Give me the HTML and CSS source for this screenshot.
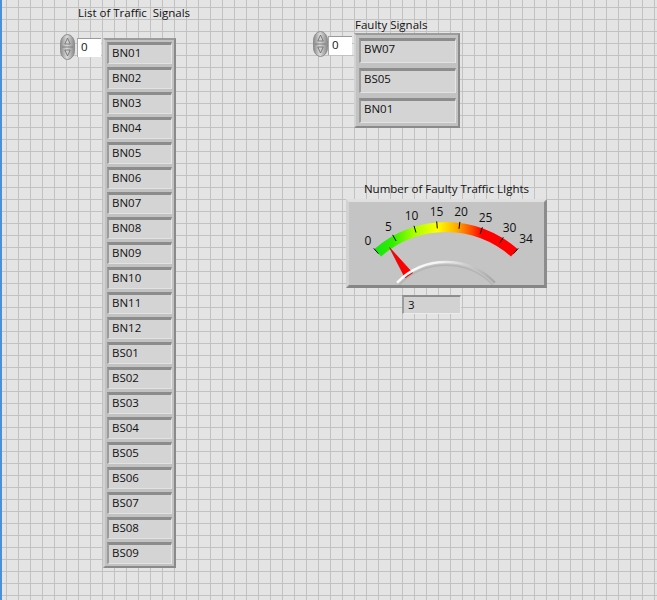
FILE: index.html
```html
<!DOCTYPE html>
<html>
<head>
<meta charset="utf-8">
<link rel="stylesheet" href="styles.css">
</head>
<body>
<div class="panel">
  <div class="ctl ctl-list">
    <div class="label label-list">List of Traffic  Signals</div>
    <div class="ctl-row">
      <svg class="spin" width="15" height="26" viewBox="0 0 15 26">
        <defs><linearGradient id="sg1" x1="0" x2="1"><stop offset="0" stop-color="#8a8a8a"/><stop offset="0.45" stop-color="#dadada"/><stop offset="1" stop-color="#8a8a8a"/></linearGradient></defs>
        <rect x="0.5" y="0.5" width="14" height="25" rx="7" ry="9" fill="url(#sg1)" stroke="#8c8c8c"/>
        <line x1="2" y1="13" x2="13" y2="13" stroke="#7c7c7c"/>
        <path d="M7.5 4 L4.8 10 L10.2 10 Z" fill="#cfcfcf" stroke="#6a6a6a" stroke-width="0.8"/>
        <path d="M7.5 22 L4.8 16 L10.2 16 Z" fill="#cfcfcf" stroke="#6a6a6a" stroke-width="0.8"/>
      </svg>
      <div class="idx idx-list">0</div>
      <div class="arr arr-list">
        <div class="el">BN01</div>
        <div class="el">BN02</div>
        <div class="el">BN03</div>
        <div class="el">BN04</div>
        <div class="el">BN05</div>
        <div class="el">BN06</div>
        <div class="el">BN07</div>
        <div class="el">BN08</div>
        <div class="el">BN09</div>
        <div class="el">BN10</div>
        <div class="el">BN11</div>
        <div class="el">BN12</div>
        <div class="el">BS01</div>
        <div class="el">BS02</div>
        <div class="el">BS03</div>
        <div class="el">BS04</div>
        <div class="el">BS05</div>
        <div class="el">BS06</div>
        <div class="el">BS07</div>
        <div class="el">BS08</div>
        <div class="el">BS09</div>
      </div>
    </div>
  </div>
  <div class="col-right">
    <div class="ctl ctl-faulty">
      <div class="label label-faulty">Faulty Signals</div>
      <div class="ctl-row">
        <svg class="spin" width="15" height="26" viewBox="0 0 15 26">
          <defs><linearGradient id="sg2" x1="0" x2="1"><stop offset="0" stop-color="#8a8a8a"/><stop offset="0.45" stop-color="#dadada"/><stop offset="1" stop-color="#8a8a8a"/></linearGradient></defs>
          <rect x="0.5" y="0.5" width="14" height="25" rx="7" ry="9" fill="url(#sg2)" stroke="#8c8c8c"/>
          <line x1="2" y1="13" x2="13" y2="13" stroke="#7c7c7c"/>
          <path d="M7.5 4 L4.8 10 L10.2 10 Z" fill="#cfcfcf" stroke="#6a6a6a" stroke-width="0.8"/>
          <path d="M7.5 22 L4.8 16 L10.2 16 Z" fill="#cfcfcf" stroke="#6a6a6a" stroke-width="0.8"/>
        </svg>
        <div class="idx idx-faulty">0</div>
        <div class="arr arr-faulty">
          <div class="el el-big">BW07</div>
          <div class="el el-big">BS05</div>
          <div class="el el-big">BN01</div>
        </div>
      </div>
    </div>
    <div class="ctl ctl-gauge">
      <div class="label label-gauge">Number of Faulty Traffic LIghts</div>
      <div class="gauge">
        <svg class="gauge-svg" width="195" height="83" viewBox="3 3 195 83">
          <defs>
            <linearGradient id="band" gradientUnits="userSpaceOnUse" x1="28" y1="0" x2="172" y2="0">
              <stop offset="0" stop-color="#14e414"/>
              <stop offset="0.13" stop-color="#30ee00"/>
              <stop offset="0.28" stop-color="#a8ff00"/>
              <stop offset="0.44" stop-color="#ffff00"/>
              <stop offset="0.57" stop-color="#ffae00"/>
              <stop offset="0.68" stop-color="#ff4a00"/>
              <stop offset="0.75" stop-color="#ff0000"/>
              <stop offset="1" stop-color="#ff0000"/>
            </linearGradient>
            <linearGradient id="hub" gradientUnits="userSpaceOnUse" x1="51" y1="0" x2="149" y2="0">
              <stop offset="0" stop-color="#ffffff"/>
              <stop offset="0.45" stop-color="#f2f2f2"/>
              <stop offset="1" stop-color="#a6a6a6"/>
            </linearGradient>
          </defs>
          <path d="M28.44 50.11 A108 108 0 0 1 171.56 50.11 L164.93 57.6 A98 98 0 0 0 35.07 57.6 Z" fill="url(#band)"/>
          <g class="ticks" stroke="#000" stroke-width="1">
            <line x1="32.4" y1="54.6" x2="27.8" y2="49.4"/>
            <line x1="50.1" y1="42.0" x2="46.7" y2="35.9"/>
            <line x1="70.0" y1="33.5" x2="68.0" y2="26.8"/>
            <line x1="91.3" y1="29.4" x2="90.7" y2="22.4"/>
            <line x1="113.0" y1="29.8" x2="113.9" y2="22.9"/>
            <line x1="134.1" y1="34.9" x2="136.4" y2="28.3"/>
            <line x1="153.6" y1="44.2" x2="157.3" y2="38.3"/>
            <line x1="167.6" y1="54.6" x2="172.2" y2="49.4"/>
          </g>
          <g class="scale">
            <text x="22" y="41.5">0</text>
            <text x="42.5" y="27">5</text>
            <text x="65.5" y="16.5">10</text>
            <text x="90.5" y="12">15</text>
            <text x="115" y="12.5">20</text>
            <text x="139.5" y="18">25</text>
            <text x="163.5" y="28.5">30</text>
            <text x="180" y="39.5">34</text>
          </g>
          <path d="M53 86 A66 66 0 0 1 147 86" fill="none" stroke="#b4b4b4" stroke-width="1.5"/>
          <path d="M43.5 48.5 L66.6 73.9 L59.2 78.9 Z" fill="#ff0000" stroke="#c80000" stroke-width="0.6"/>
          <path d="M51.1 83.7 A68 68 0 0 1 148.9 83.7" fill="none" stroke="url(#hub)" stroke-width="2.5"/>
        </svg>
      </div>
      <div class="gauge-num">3</div>
    </div>
  </div>
</div>
</body>
</html>
```

FILE: styles.css
```css
html, body {
  margin: 0;
  padding: 0;
}
body {
  font-family: "Open Sans", "Noto Sans", sans-serif;
  font-size: 11.5px;
  color: #111;
}
.panel {
  width: 657px;
  height: 600px;
  box-sizing: border-box;
  display: flex;
  align-items: flex-start;
  padding-left: 60px;
  background-color: #e4e4e4;
  background-image:
    linear-gradient(to right, #c2c2c2 1px, transparent 1px),
    linear-gradient(to bottom, #c2c2c2 1px, transparent 1px);
  background-size: 12px 12px;
  background-position: 6px 7px;
  box-shadow: inset 2px 0 0 #4a90d9;
  overflow: hidden;
}
.ctl {
  display: flex;
  flex-direction: column;
  align-items: flex-start;
}
.label {
  white-space: pre;
  line-height: 14px;
  height: 14px;
}
.ctl-list {
  width: 116px;
  flex: none;
}
.label-list {
  margin-top: 6px;
  margin-left: 18px;
}
.ctl-row {
  display: flex;
  align-items: flex-start;
}
.ctl-list .ctl-row {
  margin-top: 14px;
}
.spin {
  display: block;
  flex: none;
}
.idx {
  box-sizing: border-box;
  width: 24px;
  background: #fff;
  border-top: 1px solid #9a9a9a;
  border-left: 1px solid #a8a8a8;
  padding-left: 3px;
  line-height: 16px;
}
.idx-list {
  height: 19px;
  margin-top: 4px;
  margin-left: 2px;
}
.idx-faulty {
  height: 19px;
  margin-top: 5px;
}
.arr {
  box-sizing: border-box;
  background: #c2c2c2;
  border-style: solid;
  border-width: 2px;
  border-color: #9c9c9c #8a8a8a #8a8a8a #d2d2d2;
  display: flex;
  flex-direction: column;
}
.arr-list {
  width: 73px;
  height: 530px;
  margin-top: 4px;
  margin-left: 2px;
  padding: 2px;
  gap: 3px;
}
.el {
  box-sizing: border-box;
  height: 22px;
  background: #d4d4d4;
  border-top: 3px solid #8c8c8c;
  border-left: 2px solid #9c9c9c;
  border-right: 1px solid #e6e6e6;
  border-bottom: 1px solid #e2e2e2;
  padding-left: 3px;
  line-height: 16px;
  flex: none;
}
.col-right {
  margin-left: 137px;
  padding-top: 18px;
  display: flex;
  flex-direction: column;
  align-items: flex-start;
}
.label-faulty {
  margin-left: 42px;
  line-height: 13px;
  height: 13px;
}
.arr-faulty {
  width: 106px;
  height: 95px;
  margin-top: 2px;
  margin-left: 2px;
  padding: 3px 2px 3px 3px;
  gap: 5px;
}
.el-big {
  height: 25px;
}
.ctl-gauge {
  margin-left: 33px;
  margin-top: 54px;
}
.label-gauge {
  width: 201px;
  text-align: center;
}
.gauge {
  box-sizing: border-box;
  width: 201px;
  height: 89px;
  margin-top: 3px;
  background: #c4c4c4;
  border-style: solid;
  border-width: 3px;
  border-color: #e0e0e0 #8c8c8c #868686 #d2d2d2;
  overflow: hidden;
}
.gauge-svg {
  display: block;
}
.scale text {
  font-family: "Open Sans", "Noto Sans", sans-serif;
  font-size: 12px;
  fill: #111;
  text-anchor: middle;
  dominant-baseline: central;
}
.gauge-num {
  box-sizing: border-box;
  width: 59px;
  height: 19px;
  margin-top: 7px;
  margin-left: 56px;
  background: #d2d2d2;
  border-top: 2px solid #8e8e8e;
  border-left: 2px solid #9c9c9c;
  border-right: 1px solid #e8e8e8;
  border-bottom: 1px solid #ececec;
  padding-left: 4px;
  line-height: 15px;
}
```
